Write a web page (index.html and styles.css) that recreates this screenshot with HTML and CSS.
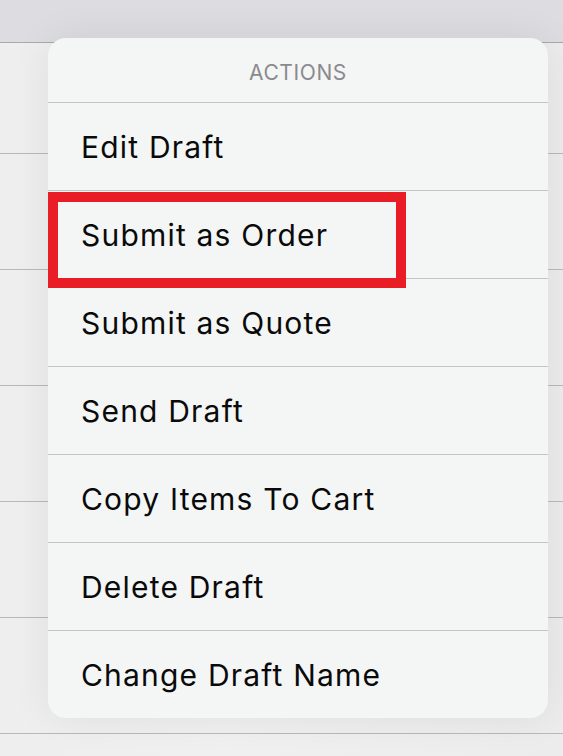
FILE: index.html
```html
<!DOCTYPE html>
<html lang="en">
<head>
<meta charset="utf-8">
<title>Actions</title>
<link rel="stylesheet" href="styles.css">
</head>
<body>
<div class="screen">
  <div class="topbar"></div>
  <ul class="bg-list">
    <li class="bg-row bg-row-first"></li>
    <li class="bg-row"></li>
    <li class="bg-row"></li>
    <li class="bg-row"></li>
    <li class="bg-row"></li>
    <li class="bg-row"></li>
  </ul>

  <div class="popover">
    <div class="popover-header">ACTIONS</div>
    <ul class="action-list">
      <li class="action">Edit Draft</li>
      <li class="action">Submit as Order</li>
      <li class="action">Submit as Quote</li>
      <li class="action">Send Draft</li>
      <li class="action">Copy Items To Cart</li>
      <li class="action">Delete Draft</li>
      <li class="action action-last">Change Draft Name</li>
    </ul>
  </div>

  <div class="highlight"></div>
</div>
</body>
</html>
```

FILE: styles.css
```css
* { box-sizing: border-box; }

html, body {
  margin: 0;
  padding: 0;
}

body {
  width: 563px;
  height: 756px;
  overflow: hidden;
  background: #eeeeee;
  font-family: Inter, "Noto Sans", "Liberation Sans", sans-serif;
}

.screen {
  position: relative;
  width: 563px;
  height: 756px;
  overflow: hidden;
  background: linear-gradient(90deg, #eeeeee 0%, #f0f0f0 40%, #ececec 100%);
}

.topbar {
  height: 43px;
  background: #dddde1;
  border-bottom: 1px solid #a9a9ab;
}

.bg-list {
  list-style: none;
  margin: 0;
  padding: 0;
}

.bg-row {
  height: 116px;
  border-bottom: 1px solid #b9b9bb;
}

.bg-row-first {
  height: 111px;
}

.popover {
  position: absolute;
  left: 48px;
  top: 38px;
  width: 500px;
  height: 680px;
  background: #f4f5f5;
  border-radius: 18px;
  overflow: hidden;
  box-shadow: 0 0 40px rgba(0, 0, 0, 0.07);
}

.popover-header {
  height: 65px;
  display: flex;
  align-items: center;
  justify-content: center;
  padding-top: 4px;
  font-size: 21px;
  color: #8a8a8e;
  letter-spacing: 0.6px;
  border-bottom: 1px solid #c4c4c6;
}

.action-list {
  list-style: none;
  margin: 0;
  padding: 0;
}

.action {
  height: 88px;
  display: flex;
  align-items: center;
  padding-left: 33px;
  font-size: 30px;
  letter-spacing: 1.2px;
  color: #0a0a0a;
  border-bottom: 1px solid #c4c4c6;
}

.action-last {
  border-bottom: none;
}

.highlight {
  position: absolute;
  left: 48px;
  top: 192px;
  width: 358px;
  height: 96px;
  border: 10px solid #e81d25;
}
```
